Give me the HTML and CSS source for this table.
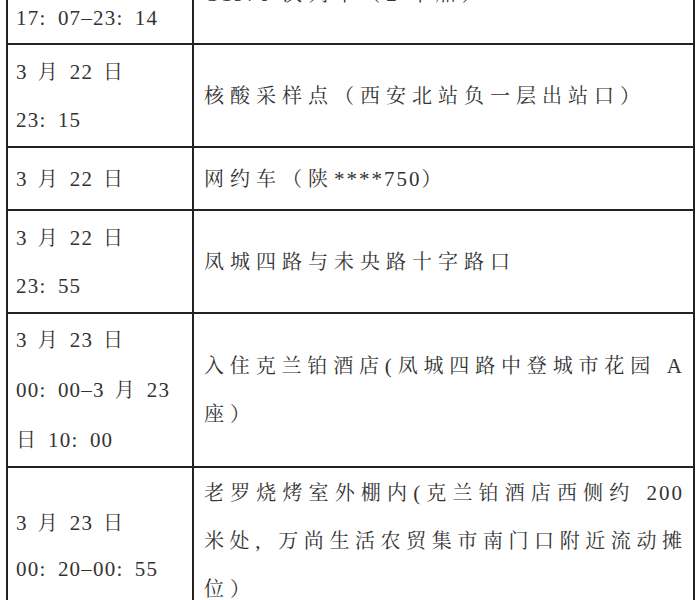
FILE: index.html
```html
<!DOCTYPE html>
<html lang="zh-CN">
<head>
<meta charset="utf-8">
<title>行程轨迹</title>
<link rel="stylesheet" href="styles.css">
</head>
<body>
<div class="sheet">
  <div class="row h101">
    <div class="cell when">
      <div><span class="num">3</span> 月 <span class="num">22</span> 日</div>
      <div class="num">17: 07–23: 14</div>
    </div>
    <div class="cell where">
      <div><span class="num">G1976</span> 次列车（<span class="num">2</span> 车厢）</div>
    </div>
  </div>
  <div class="row h103">
    <div class="cell when">
      <div><span class="num">3</span> 月 <span class="num">22</span> 日</div>
      <div class="num">23: 15</div>
    </div>
    <div class="cell where">
      <div>核酸采样点（西安北站负一层出站口）</div>
    </div>
  </div>
  <div class="row h63">
    <div class="cell when">
      <div><span class="num">3</span> 月 <span class="num">22</span> 日</div>
    </div>
    <div class="cell where">
      <div>网约车（陕<span class="num">****750</span>）</div>
    </div>
  </div>
  <div class="row h103">
    <div class="cell when">
      <div><span class="num">3</span> 月 <span class="num">22</span> 日</div>
      <div class="num">23: 55</div>
    </div>
    <div class="cell where">
      <div>凤城四路与未央路十字路口</div>
    </div>
  </div>
  <div class="row h154">
    <div class="cell when lh50">
      <div><span class="num">3</span> 月 <span class="num">23</span> 日</div>
      <div><span class="num">00: 00–3</span> 月 <span class="num">23</span></div>
      <div>日 <span class="num">10: 00</span></div>
    </div>
    <div class="cell where">
      <div class="fill">入住克兰铂酒店<span class="num">(</span>凤城四路中登城市花园 <span class="num">A</span></div>
      <div>座）</div>
    </div>
  </div>
  <div class="row h157">
    <div class="cell when lh46">
      <div><span class="num">3</span> 月 <span class="num">23</span> 日</div>
      <div class="num">00: 20–00: 55</div>
    </div>
    <div class="cell where top">
      <div class="fill">老罗烧烤室外棚内<span class="num">(</span>克兰铂酒店西侧约 <span class="num">200</span></div>
      <div class="fill">米处<span class="num">, </span>万尚生活农贸集市南门口附近流动摊</div>
      <div>位）</div>
    </div>
  </div>
</div>
</body>
</html>
```

FILE: styles.css
```css
* {
  box-sizing: border-box;
}

html, body {
  margin: 0;
  padding: 0;
  background: #ffffff;
}

body {
  font-family: "Liberation Serif", "Noto Serif CJK SC", "Noto Sans CJK SC", serif;
  font-size: 20px;
  color: #333333;
  overflow: hidden;
}

.sheet {
  display: flex;
  flex-direction: column;
  width: 689px;
  margin: -58px 0 0 6px;
  border-left: 2px solid #222;
  border-top: 2px solid #222;
}

.row {
  display: grid;
  grid-template-columns: 186px 501px;
}

.h101 { height: 101px; }
.h103 { height: 103px; }
.h63 { height: 63px; }
.h154 { height: 154px; }
.h157 { height: 157px; }

.cell {
  display: flex;
  flex-direction: column;
  justify-content: center;
  border-right: 2px solid #222;
  border-bottom: 2px solid #222;
  line-height: 48px;
  white-space: nowrap;
}

.cell.top {
  justify-content: flex-start;
  padding-top: 1px;
}

.when {
  padding-left: 8px;
  letter-spacing: 2px;
  word-spacing: 3px;
}

.when.lh50 { line-height: 50px; }
.when.lh46 { line-height: 46px; }

.where {
  padding-left: 10px;
  padding-right: 9px;
  letter-spacing: 6px;
}

.num {
  font-size: 21px;
  letter-spacing: 1.2px;
  word-spacing: 5px;
}

.where .num {
  letter-spacing: 2px;
}

.fill {
  white-space: normal;
  text-align: justify;
  text-align-last: justify;
  letter-spacing: 2px;
}
```
